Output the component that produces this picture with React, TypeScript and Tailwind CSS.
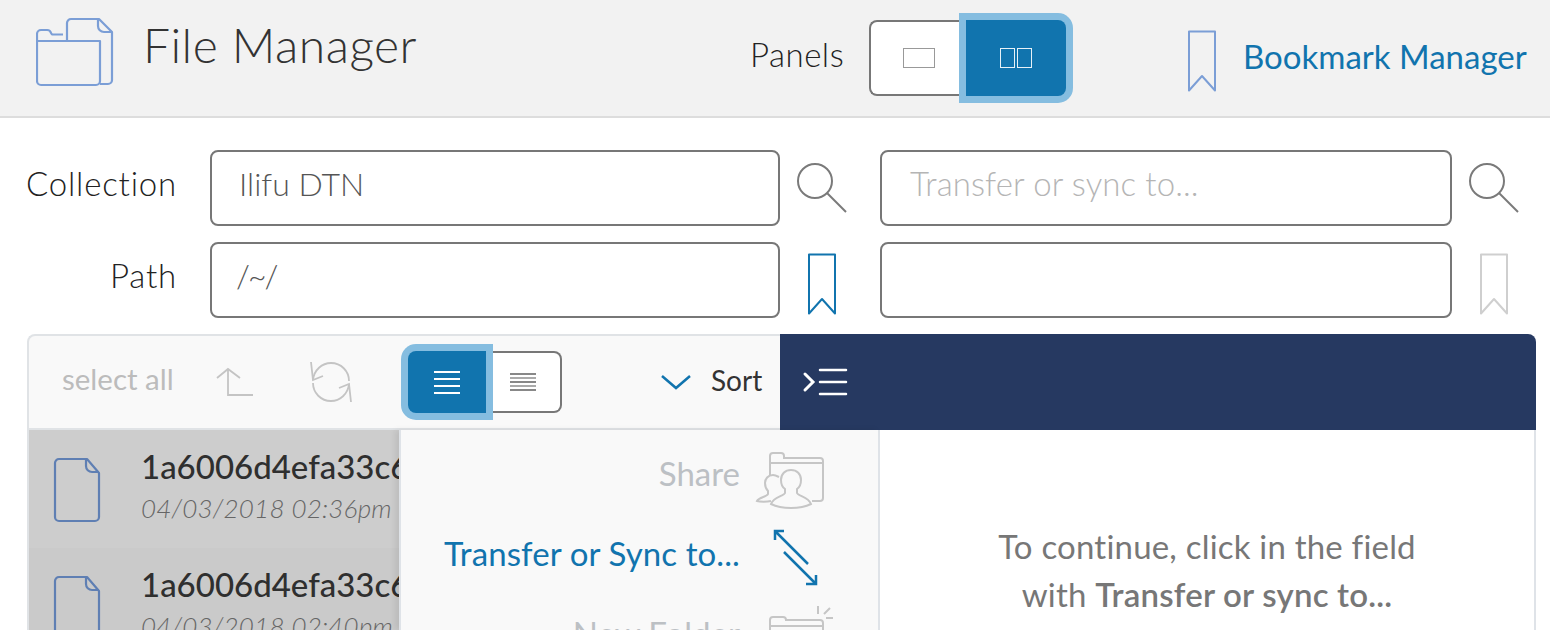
const font = { fontFamily: "Lato, 'Open Sans', sans-serif" };

function Bookmark({ color }: { color: string }) {
  return (
    <svg width="30" height="64" viewBox="0 0 30 64" fill="none" stroke={color} strokeWidth="2" strokeLinejoin="round" className="block">
      <path d="M2 2.500h26v59L15 47 2 61.500z" />
    </svg>
  );
}

function SearchIcon() {
  return (
    <svg width="52" height="52" viewBox="0 0 52 52" fill="none" stroke="#7a7a7a" strokeWidth="2" className="block">
      <circle cx="19" cy="19" r="17" />
      <path d="M31 31l19 19" />
    </svg>
  );
}

function FileIcon() {
  return (
    <svg width="48" height="66" viewBox="0 0 48 66" fill="none" stroke="#5f7fb3" strokeWidth="2.200" strokeLinejoin="round" className="block shrink-0">
      <path d="M6 2h28l12 14v44a4 4 0 0 1-4 4H6a4 4 0 0 1-4-4V6a4 4 0 0 1 4-4z" />
      <path d="M33 2v7a6 6 0 0 0 6 6h7" />
    </svg>
  );
}

function FormRow({ label, value, valueClass, placeholder, children }: { label: string; value: string; valueClass?: string; placeholder?: string; children: [React.ReactNode, React.ReactNode] }) {
  return (
    <div className="flex h-[76px] items-center">
      <div className="w-[177px] pb-[8px] text-right text-[33px] font-light tracking-[0.8px] text-[#222]">{label}</div>
      <div className="ml-[33px] flex h-[76px] w-[570px] items-center rounded-lg border-2 border-[#777] bg-white pb-[8px] pl-[27px] text-[32px] font-light text-[#555]">
        <span className={valueClass}>{value}</span>
      </div>
      <div className="w-[100px]">{children[0]}</div>
      <div className="flex h-[76px] w-[572px] items-center rounded-lg border-2 border-[#777] bg-white pb-[8px] pl-[28px] text-[33px] font-light tracking-[0.1px] text-[#b5b5b5]">
        {placeholder}
      </div>
      <div className="w-[84px]">{children[1]}</div>
    </div>
  );
}

function FileRow({ date, bg }: { date: string; bg: string }) {
  return (
    <div className={`flex h-[118px] items-start pl-[24px] pt-[27px] ${bg}`}>
      <FileIcon />
      <div className="ml-[40px] min-w-0 whitespace-nowrap">
        <div className="mt-[-13px] text-[33px] leading-[44px] font-medium text-[#2f2f2f]">1a6006d4efa33c6b09e2</div>
        <div className="mt-[3px] text-[26px] leading-[34px] font-light tracking-[0.2px] text-[#666] italic">{date}</div>
      </div>
    </div>
  );
}

export default function App() {
  return (
    <div className="h-[630px] w-[1550px] overflow-hidden bg-white" style={font}>
      <header className="flex h-[118px] items-start border-b-2 border-[#ddd] bg-[#f2f2f2]">
        <svg width="78" height="70" viewBox="0 0 78 70" fill="none" stroke="#7b9ed6" strokeWidth="2.200" strokeLinejoin="round" className="mt-[17px] ml-[36px] shrink-0">
          <path d="M1 24V17a4 4 0 0 1 4-4h6a4 4 0 0 1 4 3l1 1.500h11" />
          <path d="M1 24v40a4 4 0 0 0 4 4h55a4 4 0 0 0 4-4V24z" />
          <path d="M31 24V6a4 4 0 0 1 4-4h28l13 13v48a4 4 0 0 1-4 4h-8" />
          <path d="M62 2v7a6 6 0 0 0 6 6h8" />
        </svg>
        <div className="mt-[16px] ml-[29px] w-[607px] text-[48px] leading-[58px] font-light tracking-[0.5px] text-[#333]">File Manager</div>
        <div className="mt-[32px] w-[119px] text-[33px] leading-[44px] font-light tracking-[0.5px] text-[#222]">Panels</div>
        <div className="mt-[20px] flex h-[76px]">
          <div className="flex w-[97px] items-center justify-center rounded-l-lg border-2 border-r-0 border-[#777] bg-white">
            <div className="h-[20px] w-[32px] border-[1.500px] border-[#999]" />
          </div>
          <div className="flex w-[100px] items-center justify-center gap-[2px] rounded-r-lg bg-[#1174ae] shadow-[0_0_0_7px_#85bde0]">
            <div className="h-[20px] w-[15px] border-[1.500px] border-white/90" />
            <div className="h-[20px] w-[15px] border-[1.500px] border-white/90" />
          </div>
        </div>
        <div className="mt-[29px] ml-[121px]">
          <Bookmark color="#7b9ed6" />
        </div>
        <div className="mt-[34px] ml-[26px] text-[33px] leading-[44px] font-normal whitespace-nowrap text-[#1174ae]">Bookmark Manager</div>
      </header>

      <section className="mt-[32px] flex flex-col gap-[16px]">
        <FormRow label="Collection" value="Ilifu DTN" placeholder="Transfer or sync to...">
          <div className="ml-[16px] mt-[-1px]"><SearchIcon /></div>
          <div className="ml-[16px] mt-[-1px]"><SearchIcon /></div>
        </FormRow>
        <FormRow label="Path" value="/~/" valueClass="-ml-[3px] tracking-[-2px]">
          <div className="ml-[27px] mt-[8px]"><Bookmark color="#1174ae" /></div>
          <div className="ml-[27px] mt-[8px]"><Bookmark color="#cfcfcf" /></div>
        </FormRow>
      </section>

      <section className="mt-[16px] ml-[27px] w-[1509px]">
        <div className="flex h-[96px]">
          <div className="flex w-[753px] items-center rounded-tl-lg border-t-2 border-b-2 border-l-2 border-[#e0e3e6] bg-[#f9f9f9] pl-[33px]">
            <span className="w-[154px] pb-[5px] text-[29.500px] font-normal text-[#bcbcbc]">select all</span>
            <svg width="38" height="30" viewBox="0 0 38 30" fill="none" stroke="#c4c4c4" strokeWidth="1.800" className="mt-[-1px] shrink-0">
              <path d="M1 11l11-9 12 9M12 2v26h25" />
            </svg>
            <svg width="42" height="44" viewBox="0 0 42 44" fill="none" stroke="#c4c4c4" strokeWidth="1.800" className="ml-[56px] shrink-0">
              <path d="M3 20C4 10 12 3 21 3c10 0 18 8 18 18" />
              <path d="M1 2l2 18 10-4" />
              <path d="M39 24c-1 10-9 17-18 17-10 0-18-8-18-18" />
              <path d="M41 42l-2-18-10 4" />
            </svg>
            <div className="ml-[56px] flex h-[62px] shrink-0">
              <div className="relative z-10 flex w-[78px] flex-col items-center justify-center gap-[5px] rounded-l-lg bg-[#1174ae] shadow-[0_0_0_7px_#85bde0]">
                <div className="h-[2px] w-[26px] bg-white" />
                <div className="h-[2px] w-[26px] bg-white" />
                <div className="h-[2px] w-[26px] bg-white" />
                <div className="h-[2px] w-[26px] bg-white" />
              </div>
              <div className="flex w-[76px] flex-col items-center justify-center gap-[2px] rounded-r-lg border-2 border-l-0 border-[#777] bg-white">
                <div className="h-[2px] w-[26px] bg-[#888]" />
                <div className="h-[2px] w-[26px] bg-[#aaa]" />
                <div className="h-[2px] w-[26px] bg-[#888]" />
                <div className="h-[2px] w-[26px] bg-[#aaa]" />
                <div className="h-[2px] w-[26px] bg-[#888]" />
              </div>
            </div>
            <svg width="30" height="16" viewBox="0 0 30 16" fill="none" stroke="#1174ae" strokeWidth="2.500" className="ml-[99px] shrink-0">
              <path d="M1 2l14 12L29 2" />
            </svg>
            <span className="ml-[20px] pb-[5px] text-[28px] font-normal text-[#333]">Sort</span>
          </div>
          <div className="flex flex-1 items-center rounded-tr-lg bg-[#263961] pl-[22px]">
            <svg width="46" height="28" viewBox="0 0 46 28" fill="none" stroke="white" strokeLinecap="round">
              <path d="M3 6l8 8-8 8" strokeWidth="3" />
              <path d="M18 2h26M18 14h26M18 26h26" strokeWidth="2.500" />
            </svg>
          </div>
        </div>

        <div className="flex h-[200px]">
          <div className="w-[372px] overflow-hidden border-l-2 border-[#e0e3e6]">
            <FileRow date="04/03/2018 02:36pm" bg="bg-[#cdcdcd]" />
            <FileRow date="04/03/2018 02:40pm" bg="bg-[#cacaca]" />
          </div>
          <div className="w-[481px] border-x-2 border-[#dfe3e8] bg-[#f9f9f9] pt-[4px] shadow-[-4px_0_6px_rgba(0,0,0,0.08)]">
            <div className="flex h-[80px] items-center justify-end">
              <span className="text-[33px] font-normal text-[#bcc0c4]">Share</span>
              <svg width="70" height="60" viewBox="0 0 70 60" fill="none" stroke="#c6c6c6" strokeWidth="2" className="mt-[14px] mr-[53px] ml-[15px] shrink-0">
                <path d="M15 24V5a3 3 0 0 1 3-3h8a3 3 0 0 1 3 3v2h36a3 3 0 0 1 3 3v37a3 3 0 0 1-3 3H57" />
                <path d="M15 12h53" />
                <path d="M30 38c-3-2-4-6-4-9 0-6 4-10 10-10s10 4 10 10c0 3-1 7-4 9v4c1 3 12 4 14 11-6 3-14 4-20 4s-14-1-20-4c2-7 13-8 14-11z" />
                <path d="M24 26c-2-1-4-2-6-2-5 0-8 4-8 8 0 3 1 6 3 8v3c-1 3-9 3-11 7 3 1 10 1 14 0" />
              </svg>
            </div>
            <div className="flex h-[80px] items-center justify-end">
              <span className="text-[33px] font-normal tracking-[0.1px] text-[#1174ae]">Transfer or Sync to...</span>
              <svg width="50" height="60" viewBox="0 0 50 60" fill="none" stroke="#1174ae" strokeWidth="2.500" className="mt-[3px] mr-[58px] ml-[30px] shrink-0">
                <path d="M5 14V5h9M5 5l33 33" />
                <path d="M46 49v9H36M46 58L14 26" />
              </svg>
            </div>
            <div className="flex h-[80px] items-center justify-end">
              <span className="text-[33px] font-normal text-[#bcc0c4]">New Folder</span>
              <svg width="66" height="60" viewBox="0 0 66 60" fill="none" stroke="#c6c6c6" strokeWidth="2" className="mr-[44px] ml-[28px] shrink-0">
                <path d="M2 60V16a3 3 0 0 1 3-3h10a3 3 0 0 1 3 3h34a3 3 0 0 1 3 3v41" />
                <path d="M2 22h52" />
                <path d="M50 2v8M56 10l6-6M58 14h7" />
              </svg>
            </div>
          </div>
          <div className="flex-1 border-r-2 border-[#dfe3e8] bg-white pt-[92px] text-center text-[33px] leading-[48px] font-normal tracking-[0.2px] text-[#777]">
            <div>To continue, click in the field</div>
            <div>with <span className="font-semibold">Transfer or sync to...</span></div>
          </div>
        </div>
      </section>
    </div>
  );
}
